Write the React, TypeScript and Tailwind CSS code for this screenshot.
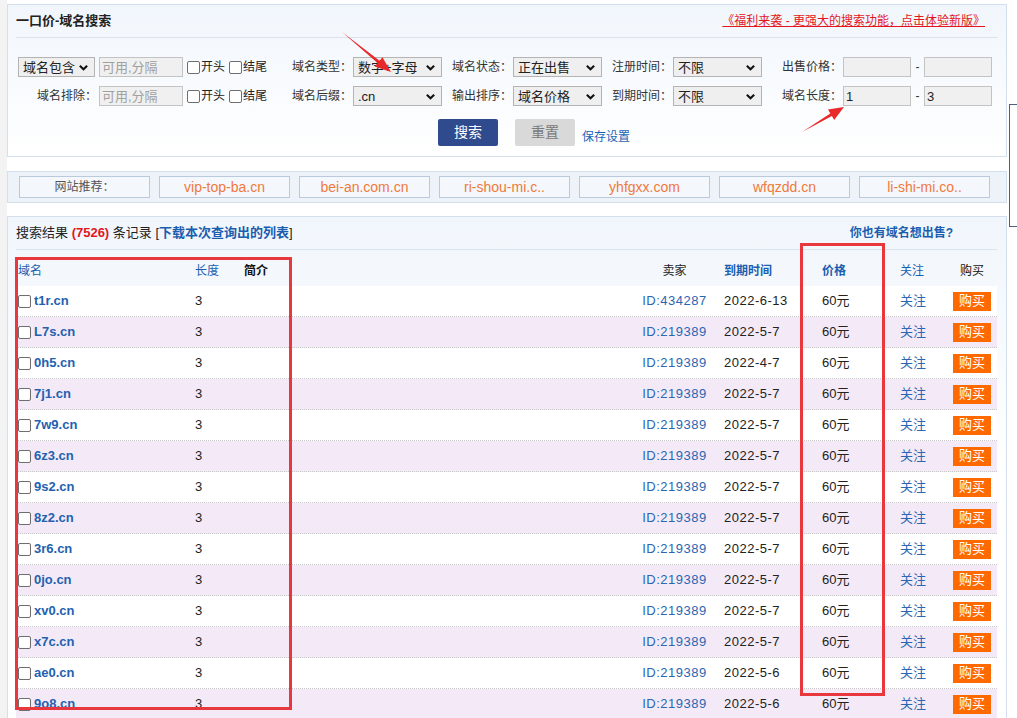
import React from "react";

const font = "font-['Liberation_Sans','Noto_Sans_CJK_SC',sans-serif]";

const rows = [
  { name: "t1r.cn", id: "434287", date: "2022-6-13" },
  { name: "L7s.cn", id: "219389", date: "2022-5-7" },
  { name: "0h5.cn", id: "219389", date: "2022-4-7" },
  { name: "7j1.cn", id: "219389", date: "2022-5-7" },
  { name: "7w9.cn", id: "219389", date: "2022-5-7" },
  { name: "6z3.cn", id: "219389", date: "2022-5-7" },
  { name: "9s2.cn", id: "219389", date: "2022-5-7" },
  { name: "8z2.cn", id: "219389", date: "2022-5-7" },
  { name: "3r6.cn", id: "219389", date: "2022-5-7" },
  { name: "0jo.cn", id: "219389", date: "2022-5-7" },
  { name: "xv0.cn", id: "219389", date: "2022-5-7" },
  { name: "x7c.cn", id: "219389", date: "2022-5-7" },
  { name: "ae0.cn", id: "219389", date: "2022-5-6" },
  { name: "9o8.cn", id: "219389", date: "2022-5-6" },
];

const recommends = ["vip-top-ba.cn", "bei-an.com.cn", "ri-shou-mi.c..", "yhfgxx.com", "wfqzdd.cn", "li-shi-mi.co.."];

function Chevron() {
  return (
    <svg width="11" height="11" viewBox="0 0 12 12" className="shrink-0">
      <polyline points="2,4 6,8 10,4" fill="none" stroke="#111" strokeWidth="2.2" />
    </svg>
  );
}

function Select({ value, w }: { value: string; w: string }) {
  return (
    <div className={`${w} h-[20px] flex items-center justify-between pl-[4px] pr-[5px] bg-[#efefef] border border-[#b4b4b4] text-[13px] text-[#222] leading-none whitespace-nowrap`}>
      <span>{value}</span>
      <Chevron />
    </div>
  );
}

function Field({ w, value, placeholder }: { w: string; value?: string; placeholder?: string }) {
  return (
    <div className={`${w} h-[20px] flex items-center px-[2px] bg-[#f0f0f0] border border-[#c3c3c3] text-[13px] leading-none whitespace-nowrap`}>
      {value ? <span className="text-[#222]">{value}</span> : <span className="text-[#a0a0a0]">{placeholder}</span>}
    </div>
  );
}

function Box() {
  return <span className="inline-block w-[13px] h-[13px] rounded-[2px] border border-[#6e6e6e] bg-white shrink-0" />;
}

function Checks() {
  return (
    <div className="flex items-center ml-[4px] text-[12px] text-[#222]">
      <Box />
      <span className="ml-[1px]">开头</span>
      <span className="ml-[4px] flex"><Box /></span>
      <span className="ml-[1px]">结尾</span>
    </div>
  );
}

function Label({ text }: { text: string }) {
  return <span className="w-[61px] text-[12px] text-[#333] whitespace-nowrap">{text}</span>;
}

export default function App() {
  return (
    <div className={`${font} relative min-h-[718px] bg-white flex overflow-hidden`}>
      <div className="w-[7px] shrink-0 bg-[#f3f3f3]" />
      <div className="w-[1000px] shrink-0 pt-[4px]">
        {/* search panel */}
        <div className="h-[153px] border border-[#d3dfed] bg-gradient-to-b from-[#f1f6fc] to-white">
          <div className="mx-[8px] h-[33px] flex items-center justify-between border-b border-[#dbe4ee]">
            <span className="text-[13px] font-bold text-[#222]">一口价-域名搜索</span>
            <a className="text-[12px] text-[#e3161d] underline mr-[13px]">《福利来袭 - 更强大的搜索功能，点击体验新版》</a>
          </div>

          <div className="pl-[10px] pt-[19px] flex flex-col gap-[9px]">
            <div className="flex items-center">
              <div className="w-[274px] flex items-center">
                <Select value="域名包含" w="w-[77px]" />
                <div className="ml-[4px]"><Field w="w-[84px]" placeholder="可用,分隔" /></div>
                <Checks />
              </div>
              <Label text="域名类型：" />
              <Select value="数字+字母" w="w-[89px]" />
              <div className="w-[10px]" />
              <Label text="域名状态：" />
              <Select value="正在出售" w="w-[89px]" />
              <div className="w-[10px]" />
              <Label text="注册时间：" />
              <Select value="不限" w="w-[89px]" />
              <div className="w-[20px]" />
              <Label text="出售价格：" />
              <Field w="w-[68px]" />
              <span className="w-[13px] text-center text-[12px] text-[#333]">-</span>
              <Field w="w-[68px]" />
            </div>
            <div className="flex items-center">
              <div className="w-[274px] flex items-center">
                <span className="w-[81px] text-right text-[12px] text-[#333] pr-[2px]">域名排除：</span>
                <Field w="w-[84px]" placeholder="可用,分隔" />
                <Checks />
              </div>
              <Label text="域名后缀：" />
              <Select value=".cn" w="w-[89px]" />
              <div className="w-[10px]" />
              <Label text="输出排序：" />
              <Select value="域名价格" w="w-[89px]" />
              <div className="w-[10px]" />
              <Label text="到期时间：" />
              <Select value="不限" w="w-[89px]" />
              <div className="w-[20px]" />
              <Label text="域名长度：" />
              <Field w="w-[68px]" value="1" />
              <span className="w-[13px] text-center text-[12px] text-[#333]">-</span>
              <Field w="w-[68px]" value="3" />
            </div>
          </div>

          <div className="mt-[13px] pl-[430px] flex items-center">
            <button className="w-[60px] h-[27px] bg-[#2f4b8d] text-white text-[14px] rounded-[2px]">搜索</button>
            <button className="ml-[17px] w-[60px] h-[27px] bg-[#d9d9d9] text-[#7a7a7a] text-[14px] rounded-[2px]">重置</button>
            <a className="ml-[7px] mt-[8px] text-[12px] text-[#1b63b5]">保存设置</a>
          </div>
        </div>

        {/* recommend bar */}
        <div className="mt-[14px] h-[32px] border border-[#d3dfed] bg-[#eef3fa] flex items-center pl-[11px] gap-[9px]">
          <div className="w-[131px] h-[22px] border border-[#b9cadd] bg-[#f4f7fb] flex items-center justify-center text-[12px] text-[#555]">网站推荐：</div>
          {recommends.map((r) => (
            <div key={r} className="w-[131px] h-[22px] border border-[#b9cadd] bg-[#f4f7fb] flex items-center justify-center text-[14px] text-[#ef7a3c]">
              {r}
            </div>
          ))}
        </div>

        {/* results */}
        <div className="mt-[13px] border border-[#d3dfed] bg-gradient-to-b from-[#f1f6fc] via-white to-white pb-[20px]">
          <div className="mx-[8px] w-[981px] h-[33px] flex items-center justify-between border-b border-[#dbe4ee] text-[13px]">
            <div className="text-[#222]">
              搜索结果 <span className="text-[#e3161d] font-bold">(7526)</span> 条记录 [<a className="text-[#1a5eb0] font-bold">下载本次查询出的列表</a>]
            </div>
            <a className="text-[#1a5eb0] font-bold mr-[44px] text-[12px]">你也有域名想出售?</a>
          </div>

          <div className="ml-[8px] w-[981px] mt-[6px]">
            <div className="grid grid-cols-[179px_49px_390px_81px_85px_84px_63px_50px] h-[30px] items-center text-[12px]">
              <span className="text-[#1a5eb0] pl-[2px]">域名</span>
              <span className="text-[#1a5eb0]">长度</span>
              <span className="text-[#111] font-bold">简介</span>
              <span className="text-[#222] text-center">卖家</span>
              <span className="text-[#1a5eb0] font-bold pl-[9px]">到期时间</span>
              <span className="text-[#1a5eb0] font-bold pl-[22px]">价格</span>
              <span className="text-[#1a5eb0] pl-[16px]">关注</span>
              <span className="text-[#111] text-center">购买</span>
            </div>
            {rows.map((r, i) => (
              <div
                key={r.name}
                className={`grid grid-cols-[179px_49px_390px_81px_85px_84px_63px_50px] h-[31px] items-center border-b border-dotted border-[#c9c9c9] ${i % 2 === 1 ? "bg-[#f4eaf7]" : "bg-white"}`}
              >
                <div className="flex items-center pl-[2px]">
                  <Box />
                  <span className="ml-[3px] text-[13px] font-bold text-[#2361b0]">{r.name}</span>
                </div>
                <span className="text-[13px] text-[#222]">3</span>
                <span />
                <span className="text-center text-[13px] tracking-[0.5px] text-[#2a66b2]">ID:{r.id}</span>
                <span className="pl-[9px] text-[13px] tracking-[0.5px] text-[#222]">{r.date}</span>
                <span className="pl-[22px] text-[13px] text-[#222]">60元</span>
                <span className="pl-[16px] text-[13px] text-[#2a66b2]">关注</span>
                <div className="flex justify-center">
                  <span className="w-[38px] h-[19px] bg-[#ff6a00] text-white text-[13px] flex items-center justify-center">购买</span>
                </div>
              </div>
            ))}
          </div>
        </div>
      </div>

      {/* floating box at right edge */}
      <div className="absolute left-[1009px] top-[104px] w-[20px] h-[123px] border border-[#4f5f7f] bg-white" />

      {/* annotations */}
      <div className="absolute left-[15px] top-[257px] w-[277px] h-[453px] border-[3px] border-[#e8383d] pointer-events-none" />
      <div className="absolute left-[800px] top-[243px] w-[85px] h-[453px] border-[3px] border-[#e8383d] pointer-events-none" />
      <svg className="absolute left-0 top-0 pointer-events-none" width="1017" height="718">
        <polygon points="342,32 379.6,60.7 382.4,57.2 391,72 374.8,66.6 377.6,63.1" fill="#e8282b" />
        <polygon points="802,132 830.3,113.4 828,109.5 844,107 834.2,119.9 831.9,116" fill="#e8282b" />
      </svg>
    </div>
  );
}
